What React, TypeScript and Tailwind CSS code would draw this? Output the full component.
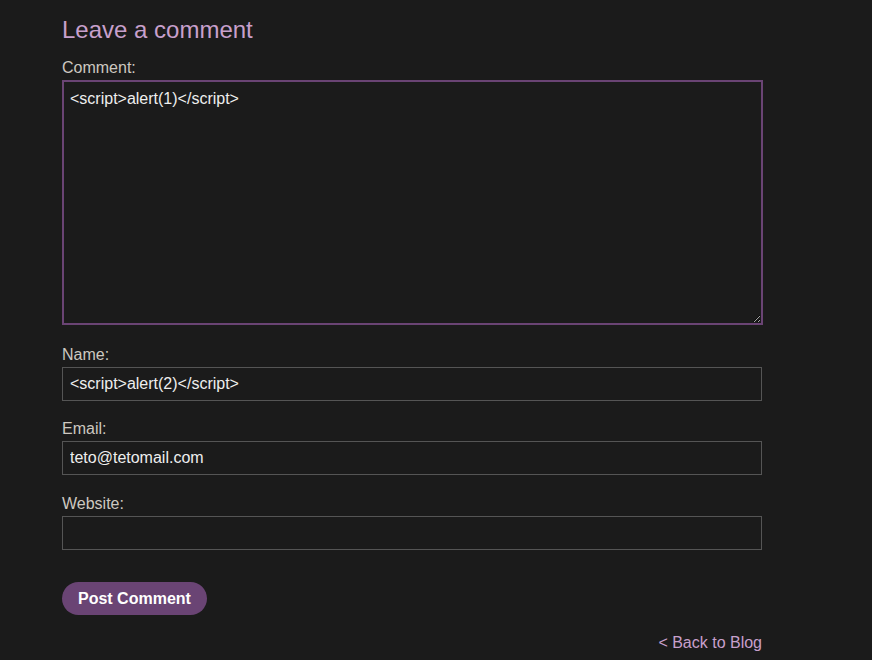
import { useState } from "react";

const label = "block text-base leading-[18px] text-[#cdc8c0] mb-[3px]";
const field =
  "block w-[700px] bg-[#1b1b1b] border border-[#555555] px-[7px] py-[7px] text-base leading-[18px] text-[#eeeeee] outline-none";

export default function App() {
  const [comment, setComment] = useState("<script>alert(1)</script>");
  const [name, setName] = useState("<script>alert(2)</script>");
  const [email, setEmail] = useState("teto@tetomail.com");
  const [site, setSite] = useState("");

  return (
    <div className="min-h-[660px] bg-[#1b1b1b] font-['Liberation_Sans',Arial,sans-serif] [color-scheme:dark]">
      <div className="w-[700px] ml-[62px] pt-[16px]">
        <h2 className="text-2xl leading-[28px] text-[#c8a0cc] mb-[15px]">Leave a comment</h2>

        <label className={label}>Comment:</label>
        <textarea
          className="block w-[701px] h-[245px] bg-[#1b1b1b] border-2 border-[#6a4474] px-1.5 pt-[8px] text-base leading-[18px] text-[#eeeeee] outline-none"
          value={comment}
          onChange={(e) => setComment(e.target.value)}
        />

        <label className={`${label} mt-[21px]`}>Name:</label>
        <input className={field} value={name} onChange={(e) => setName(e.target.value)} />

        <label className={`${label} mt-[19px]`}>Email:</label>
        <input className={field} value={email} onChange={(e) => setEmail(e.target.value)} />

        <label className={`${label} mt-[20px]`}>Website:</label>
        <input className={field} value={site} onChange={(e) => setSite(e.target.value)} />

        <button className="mt-[32px] h-[33px] px-4 rounded-full bg-[#6a4474] text-white font-bold text-base">
          Post Comment
        </button>

        <div className="flex justify-end mt-[19px]">
          <a href="#" className="text-base leading-[18px] text-[#c8a0cc]">
            &lt; Back to Blog
          </a>
        </div>
      </div>
    </div>
  );
}
